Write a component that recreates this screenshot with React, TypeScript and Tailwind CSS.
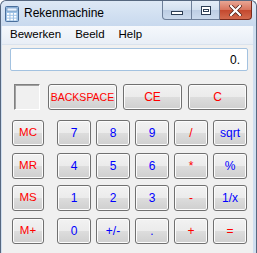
const font = { fontFamily: '"Liberation Sans", Arial, sans-serif' };

type Key = { label: string; red?: boolean };

const rows: Key[][] = [
  [{ label: "MC", red: true }, { label: "7" }, { label: "8" }, { label: "9" }, { label: "/", red: true }, { label: "sqrt" }],
  [{ label: "MR", red: true }, { label: "4" }, { label: "5" }, { label: "6" }, { label: "*", red: true }, { label: "%" }],
  [{ label: "MS", red: true }, { label: "1" }, { label: "2" }, { label: "3" }, { label: "-", red: true }, { label: "1/x" }],
  [{ label: "M+", red: true }, { label: "0" }, { label: "+/-" }, { label: "." }, { label: "+", red: true }, { label: "=", red: true }],
];

function Btn({ label, red, className }: Key & { className: string }) {
  return (
    <button
      className={`h-[26px] rounded-[3px] border border-[#707070] bg-[linear-gradient(#f2f2f2_0%,#ebebeb_50%,#dddddd_50%,#cfcfcf_100%)] shadow-[inset_0_0_0_1px_#fcfcfc] leading-none flex items-center justify-center ${
        red ? "text-[#ff0000]" : "text-[#0000ff]"
      } ${className}`}
      style={font}
    >
      {label}
    </button>
  );
}

function CalcIcon() {
  return (
    <svg width="14" height="16" viewBox="0 0 14 16">
      <rect x="0.5" y="0.5" width="13" height="15" rx="1" fill="#9fc3e6" stroke="#4a6f9c" />
      <rect x="2" y="2" width="10" height="3" fill="#e8f3ff" stroke="#5b82b0" strokeWidth="0.6" />
      {[0, 1, 2].map((r) =>
        [0, 1, 2].map((c) => (
          <rect key={`${r}${c}`} x={2 + c * 3.5} y={7 + r * 2.8} width="2.4" height="1.8" fill="#ffffff" />
        ))
      )}
    </svg>
  );
}

export default function App() {
  return (
    <div className="w-[257px] h-[253px] overflow-hidden bg-white" style={font}>
      <div className="w-[257px] h-[253px] rounded-t-[6px] border border-b-0 border-[#56677f] bg-[#cfdeef] flex flex-col">
        {/* title bar */}
        <div className="h-[25px] shrink-0 flex items-start bg-[linear-gradient(#dde8f5,#c8d9ee)] rounded-t-[6px]">
          <div className="ml-[4px] mt-[5px]">
            <CalcIcon />
          </div>
          <span className="ml-[5px] mt-[5px] text-[12px] leading-[15px] text-black">Rekenmachine</span>
          <div className="ml-auto mr-[4px] flex">
            <div className="w-[30px] h-[19px] border border-[#6d7f99] border-t-0 rounded-bl-[4px] bg-[linear-gradient(#e4edf7_0%,#d3e0ef_50%,#bccde3_50%,#cbdaed_100%)] flex items-center justify-center">
              <div className="w-[12px] h-[4px] mt-[5px] border border-[#2c3e55] bg-white" />
            </div>
            <div className="w-[28px] h-[19px] border border-l-0 border-[#6d7f99] border-t-0 bg-[linear-gradient(#e4edf7_0%,#d3e0ef_50%,#bccde3_50%,#cbdaed_100%)] flex items-center justify-center">
              <div className="w-[10px] h-[9px] border border-[#2c3e55] bg-white flex items-center justify-center">
                <div className="w-[6px] h-[3px] border border-[#2c3e55]" />
              </div>
            </div>
            <div className="w-[32px] h-[19px] border border-l-0 border-[#7a2a1c] border-t-0 rounded-br-[4px] bg-[linear-gradient(#e8a694_0%,#d7735c_50%,#c4472d_50%,#d26a4e_100%)] flex items-center justify-center">
              <svg width="13" height="11" viewBox="0 0 13 11">
                <path d="M2 1 L11 10 M11 1 L2 10" stroke="#4a1a10" strokeWidth="3.6" strokeLinecap="square" />
                <path d="M2 1 L11 10 M11 1 L2 10" stroke="#ffffff" strokeWidth="2.2" strokeLinecap="square" />
              </svg>
            </div>
          </div>
        </div>

        {/* client area */}
        <div className="flex-1 mx-[1px] mr-[3px] flex flex-col bg-[#f0f0f0]">
          {/* menu */}
          <div className="h-[19px] flex items-center text-[11.5px] text-black bg-[linear-gradient(#f5f8fc,#e8eef6)] border-b border-[#dae3ee]">
            <span className="ml-[8px]">Bewerken</span>
            <span className="ml-[14px]">Beeld</span>
            <span className="ml-[14px]">Help</span>
          </div>

          {/* display */}
          <div className="mt-[3px] ml-[8px] w-[238px] h-[23px] rounded-[2px] border border-[#a3c2e0] bg-white flex items-center justify-end pr-[7px] text-[12px] text-black">
            0.
          </div>

          {/* top row */}
          <div className="mt-[13px] flex items-center">
            <div className="ml-[12px] w-[26px] h-[26px] border border-t-[#808080] border-l-[#808080] border-b-white border-r-white bg-[#f0f0f0] shadow-[inset_1px_1px_0_#a0a0a0]" />
            <Btn label="BACKSPACE" red className="ml-[8px] w-[69px] text-[10.5px]" />
            <Btn label="CE" red className="ml-[6px] w-[59px] text-[12px]" />
            <Btn label="C" red className="ml-[6px] w-[59px] text-[12px]" />
          </div>

          {/* keypad */}
          <div className="mt-[10px] flex flex-col gap-[6.5px]">
            {rows.map((row, i) => (
              <div key={i} className="flex">
                <Btn {...row[0]} className="ml-[10px] w-[32px] text-[11.5px]" />
                <div className="ml-[13px] flex gap-[5px]">
                  {row.slice(1).map((k) => (
                    <Btn key={k.label} {...k} className="w-[34px] text-[12px]" />
                  ))}
                </div>
              </div>
            ))}
          </div>
        </div>
      </div>
    </div>
  );
}
